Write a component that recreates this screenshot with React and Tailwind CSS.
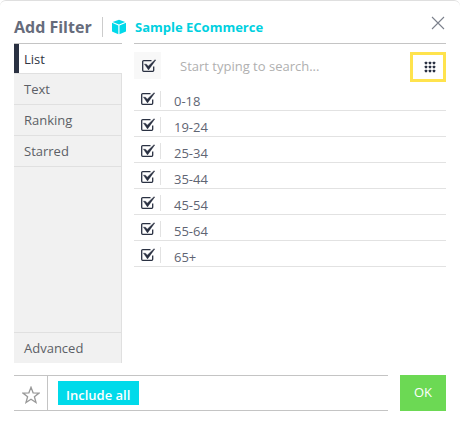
import { useState } from "react";

const tabs = ["List", "Text", "Ranking", "Starred"];
const ranges = ["0-18", "19-24", "25-34", "35-44", "45-54", "55-64", "65+"];

function CheckIcon({ checked }) {
  return (
    <svg width="14" height="14" viewBox="0 0 14 14" fill="none" stroke="#2a3142" aria-hidden="true">
      <path d="M9.5 1.6H1.7a1 1 0 0 0-1 1v8.7a1 1 0 0 0 1 1h9a1 1 0 0 0 1-1V7.5" strokeWidth="1.3" />
      {checked && <path d="M2.4 5.1 4.8 5.4 6.2 7.2 12.8.9h1L6.5 10.9 2.4 5.1Z" fill="#2a3142" strokeWidth=".4" />}
    </svg>
  );
}

function CubeIcon() {
  return (
    <svg width="16" height="16" viewBox="0 0 16 16" fill="#00d9ea" aria-hidden="true">
      <path d="M8 .8 14.2 3 8 5.4 1.6 3Z" />
      <path d="M1 3.8 7.3 6.4v8.8L1 12.6Z" />
      <path d="M15 3.8 8.5 6.4v8.8l6.5-2.6Z" />
    </svg>
  );
}

function GridIcon() {
  return (
    <svg width="12" height="12" viewBox="0 0 12 12" fill="#2a3142" aria-hidden="true">
      {[0, 1, 2].map((r) =>
        [0, 1, 2].map((c) => (
          <rect key={`${r}${c}`} x={0.8 + c * 4} y={0.8 + r * 4} width="2.4" height="2.4" rx="0.4" />
        ))
      )}
    </svg>
  );
}

export default function App() {
  const [active, setActive] = useState("List");
  const [query, setQuery] = useState("");
  const [selected, setSelected] = useState(ranges);
  const all = selected.length === ranges.length;

  const toggle = (r) =>
    setSelected((s) => (s.includes(r) ? s.filter((x) => x !== r) : [...s, r]));

  return (
    <div className="min-h-screen rounded-md border-t border-[#dfdfdf] bg-white px-3.5 pb-3.5 font-['Open_Sans','Noto_Sans',sans-serif] text-[13px] text-[#5f6573]">
      <header className="flex h-[42px]">
        <h1 className="mt-4 w-[88px] shrink-0 whitespace-nowrap text-base leading-5 font-bold text-[#666c7c]">Add Filter</h1>
        <div className="mt-4 flex h-5 items-center border-l border-[#cccccc] pl-2">
          <CubeIcon />
          <span className="ml-2 text-[13px] leading-5 font-bold text-[#00d0e0]">Sample ECommerce</span>
        </div>
        <button type="button" aria-label="Close" className="mt-[15px] ml-auto h-[14px] w-[15px]">
          <svg width="14" height="14" viewBox="0 0 14 14" stroke="#7b808c" strokeWidth="1.1" aria-hidden="true">
            <path d="m1 1 12 12M13 1 1 13" />
          </svg>
        </button>
      </header>

      <div className="flex gap-3">
        <nav className="flex min-h-80 w-27 shrink-0 flex-col border-t border-[#c4c4c4] bg-[#f1f1f1] text-[#5c5f66]">
          {tabs.map((t) => (
            <button
              key={t}
              type="button"
              onClick={() => setActive(t)}
              className={
                t === active
                  ? "h-[30px] border-b border-[#e0e0e0] bg-white text-left text-[#2f3543]"
                  : "h-[31px] border-r border-b border-[#e0e0e0] pt-0.5 pl-2.5 text-left"
              }
            >
              {t === active ? (
                <span className="flex h-full items-center border-l-5 border-[#2a3142] pt-0.5 pl-[5px]">{t}</span>
              ) : (
                t
              )}
            </button>
          ))}
          <div className="flex-1 border-r border-[#e0e0e0]" />
          <button type="button" className="h-[31px] border-t border-r border-[#e0e0e0] pt-0.5 pl-2.5 text-left">
            Advanced
          </button>
        </nav>

        <section className="min-w-0 flex-1 border-t border-[#c4c4c4]">
          <div className="flex h-[41px] items-start pt-2">
            <label className="relative flex size-[27px] items-center justify-center bg-[#f8f8f8] pl-0.5">
              <input
                type="checkbox"
                aria-label="Select all"
                className="sr-only"
                checked={all}
                onChange={() => setSelected(all ? [] : ranges)}
              />
              <CheckIcon checked={all} />
            </label>
            <input
              type="text"
              aria-label="Search"
              value={query}
              onChange={(e) => setQuery(e.target.value)}
              placeholder="Start typing to search..."
              className="ml-[19px] h-7 min-w-0 flex-1 outline-none placeholder:text-[#b0b0b0]"
            />
            <button type="button" aria-label="Grid view" className="flex h-[30px] w-9 items-center justify-center border-3 border-[#ffe34d] pl-1">
              <GridIcon />
            </button>
          </div>
          <ul>
            {ranges
              .filter((r) => r.includes(query))
              .map((r) => (
                <li key={r} className="border-b border-[#e2e2e2]">
                  <label className="relative flex h-[25px] items-end">
                    <input type="checkbox" className="sr-only" checked={selected.includes(r)} onChange={() => toggle(r)} />
                    <span className="mb-[3px] flex h-4 w-[27px] items-start border-r border-[#e2e2e2] pt-px pl-[7px]">
                      <CheckIcon checked={selected.includes(r)} />
                    </span>
                    <span className="pl-[13px] leading-[18px]">{r}</span>
                  </label>
                </li>
              ))}
          </ul>
        </section>
      </div>

      <footer className="mt-3 flex gap-3">
        <div className="flex h-9 flex-1 border-y border-[#c4c4c4]">
          <button type="button" aria-label="Star filter" className="flex w-[34px] items-center justify-center border-r border-[#c4c4c4] pt-1">
            <svg width="18" height="18" viewBox="0 0 18 18" fill="none" stroke="#999999" strokeWidth="1.3" aria-hidden="true">
              <path d="m9 1.3 2.1 5.5 5.9.3-4.6 3.6 1.6 5.8L9 13.2l-5 3.3 1.6-5.8L1 7.1l5.9-.3Z" />
            </svg>
          </button>
          <button type="button" className="mt-[5px] ml-2.5 h-6 bg-[#00daea] pt-1 pr-[9px] pl-2 leading-5 font-semibold text-white">
            Include all
          </button>
        </div>
        <button type="button" className="h-9 w-[46px] bg-[#6cd954] text-white">
          OK
        </button>
      </footer>
    </div>
  );
}
